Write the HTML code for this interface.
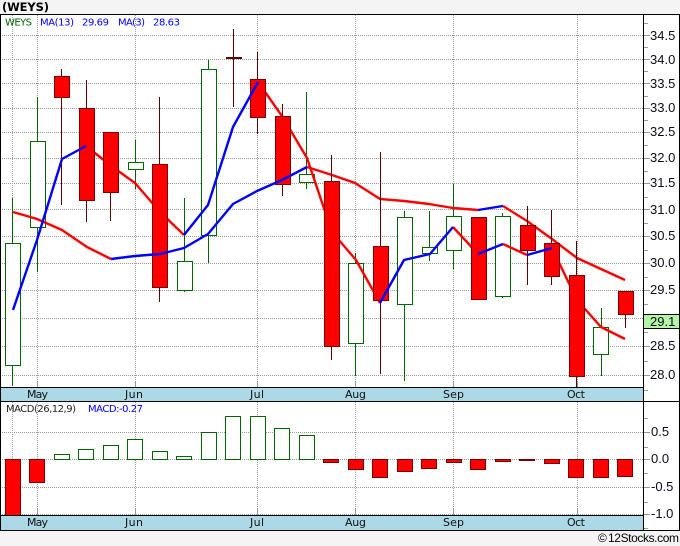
<!DOCTYPE html>
<html><head><meta charset="utf-8"><title>(WEYS)</title>
<style>
html,body{margin:0;padding:0;width:680px;height:546px;background:#f4f4f4;overflow:hidden}
svg{display:block}
text{font-family:"DejaVu Sans","Liberation Sans",sans-serif;font-size:11px;fill:#111}
text.a{font-family:"Liberation Sans",sans-serif;font-size:13px;fill:#0a0a1e}
.g{stroke:#999;stroke-width:1;stroke-dasharray:1 1;fill:none}
.t{stroke:#999;stroke-width:1;fill:none}
.gw{stroke:#006400;stroke-width:1;fill:none}
.rw{stroke:#5a0000;stroke-width:1;fill:none}
.gb{stroke:#006400;stroke-width:1;fill:#fff}
.rb{stroke:#7a0000;stroke-width:1;fill:#f00}
.rl{stroke:#f00;stroke-width:2.4;fill:none;stroke-linejoin:round}
.bl{stroke:#00f;stroke-width:2.4;fill:none;stroke-linejoin:round}
</style></head><body>
<svg width="680" height="546" viewBox="0 0 680 546" xmlns="http://www.w3.org/2000/svg">
<rect width="680" height="546" fill="#f4f4f4"/>
<text x="2" y="11" textLength="47" style="font-weight:bold;font-size:11.5px;fill:#000">(WEYS)</text>
<rect x="0" y="14" width="680" height="517" fill="#fff"/>
<rect x="0" y="388" width="643" height="13" fill="#add8e6"/>
<rect x="0" y="516" width="643" height="14" fill="#add8e6"/>

<path class="g" d="M2 35.5H643M2 59.5H643M2 83.5H643M2 108.5H643M2 132.5H643M2 158.5H643M2 183.5H643M2 209.5H643M2 236.5H643M2 263.5H643M2 290.5H643M2 318.5H643M2 346.5H643M2 375.5H643"/>
<path class="g" d="M12.5 15V387M37.5 15V387M135.5 15V387M257.5 15V387M355.5 15V387M453.5 15V387M577.5 15V387"/>
<path class="g" d="M2 432.5H643M2 459.5H643M2 487.5H643M2 514.5H643"/>
<path class="g" d="M12.5 402V515M37.5 402V515M135.5 402V515M257.5 402V515M355.5 402V515M453.5 402V515M577.5 402V515"/>
<path class="t" d="M37.5 381V387M135.5 381V387M257.5 381V387M355.5 381V387M453.5 381V387M577.5 381V387M37.5 509V515M135.5 509V515M257.5 509V515M355.5 509V515M453.5 509V515M577.5 509V515"/>

<path class="gw" d="M12.5 198V386M37.5 97V272M135.5 140V189M184.5 198V292M208.5 60V263M306.5 92V189M355.5 253V376M404.5 211V381M429.5 211V261M453.5 184V269M502.5 213V298M601.5 308V376"/>
<rect class="gb" x="5.5" y="243.5" width="15" height="122"/>
<rect class="gb" x="30.5" y="141.5" width="15" height="86"/>
<rect class="gb" x="128.5" y="162.5" width="15" height="7"/>
<rect class="gb" x="177.5" y="261.5" width="15" height="29"/>
<rect class="gb" x="201.5" y="69.5" width="15" height="166"/>
<rect class="gb" x="299.5" y="174.5" width="15" height="8"/>
<rect class="gb" x="348.5" y="263.5" width="15" height="80"/>
<rect class="gb" x="397.5" y="217.5" width="15" height="87"/>
<rect class="gb" x="422.5" y="247.5" width="15" height="6"/>
<rect class="gb" x="446.5" y="216.5" width="15" height="34"/>
<rect class="gb" x="495.5" y="216.5" width="15" height="80"/>
<rect class="gb" x="593.5" y="327.5" width="15" height="27"/>

<path class="rl" d="M13 212L37 219L62 230L87 247L111 259"/>
<path class="rl" d="M307 167L332 175L355 183L380 199L404 201L429 204L453 208L478 210"/>
<path class="rl" d="M503 206L527 221L552 239L577 258L601 269L625 280"/>
<path class="rl" d="M86 146L110 165L135 183L160 212L184 235"/>
<path class="rl" d="M258 82L282 116L307 158L332 232L356 260L380 303"/>
<path class="rl" d="M453 227L478 254"/>
<path class="rl" d="M503 244L527 255"/>
<path class="rl" d="M552 248L577 300L601 327L625 339"/>

<path class="rw" d="M61.5 69V205M86.5 80V222M110.5 192V221M159.5 97V302M233.5 29V107M257.5 52V134M282.5 104V196M331.5 155V360M380.5 152V374M527.5 206V285M551.5 210V285M576.5 241V387M625.5 314V328"/>
<rect class="rb" x="54.5" y="76.5" width="15" height="21"/>
<rect class="rb" x="79.5" y="108.5" width="15" height="92"/>
<rect class="rb" x="103.5" y="132.5" width="15" height="60"/>
<rect class="rb" x="152.5" y="164.5" width="15" height="123"/>
<rect x="226" y="57" width="16" height="2" fill="#5a0000"/>
<rect class="rb" x="250.5" y="79.5" width="15" height="38"/>
<rect class="rb" x="275.5" y="116.5" width="15" height="68"/>
<rect class="rb" x="324.5" y="181.5" width="15" height="165"/>
<rect class="rb" x="373.5" y="246.5" width="15" height="54"/>
<rect class="rb" x="471.5" y="217.5" width="15" height="82"/>
<rect class="rb" x="520.5" y="225.5" width="15" height="25"/>
<rect class="rb" x="544.5" y="243.5" width="15" height="33"/>
<rect class="rb" x="569.5" y="275.5" width="15" height="101"/>
<rect class="rb" x="618.5" y="291.5" width="15" height="23"/>

<path class="bl" d="M13 310L37 240L62 159L86 146"/>
<path class="bl" d="M184 235L208 205L233 127L258 82"/>
<path class="bl" d="M111 259L135 256L160 254L184 248L208 234L233 204L257 191L282 180L307 167"/>
<path class="bl" d="M380 303L404 260L430 254L453 227"/>
<path class="bl" d="M478 254L503 244"/>
<path class="bl" d="M478 210L503 206"/>
<path class="bl" d="M527 255L552 248"/>

<rect class="rb" x="5.5" y="459.5" width="15" height="56"/>
<rect class="rb" x="29.5" y="459.5" width="15" height="23"/>
<rect class="gb" x="54.5" y="454.5" width="15" height="5"/>
<rect class="gb" x="78.5" y="449.5" width="15" height="10"/>
<rect class="gb" x="103.5" y="445.5" width="15" height="14"/>
<rect class="gb" x="127.5" y="439.5" width="15" height="20"/>
<rect class="gb" x="152.5" y="451.5" width="15" height="8"/>
<rect class="gb" x="176.5" y="456.5" width="15" height="3"/>
<rect class="gb" x="201.5" y="432.5" width="15" height="27"/>
<rect class="gb" x="225.5" y="416.5" width="15" height="43"/>
<rect class="gb" x="250.5" y="416.5" width="15" height="43"/>
<rect class="gb" x="274.5" y="428.5" width="15" height="31"/>
<rect class="gb" x="299.5" y="435.5" width="15" height="24"/>
<rect class="rb" x="323.5" y="459.5" width="15" height="3"/>
<rect class="rb" x="348.5" y="459.5" width="15" height="10"/>
<rect class="rb" x="372.5" y="459.5" width="15" height="18"/>
<rect class="rb" x="397.5" y="459.5" width="15" height="12"/>
<rect class="rb" x="421.5" y="459.5" width="15" height="9"/>
<rect class="rb" x="446.5" y="459.5" width="15" height="3"/>
<rect class="rb" x="470.5" y="459.5" width="15" height="10"/>
<rect class="rb" x="495.5" y="459.5" width="15" height="2"/>
<rect class="rb" x="519.5" y="459.5" width="15" height="1"/>
<rect class="rb" x="544.5" y="459.5" width="15" height="4"/>
<rect class="rb" x="568.5" y="459.5" width="15" height="18"/>
<rect class="rb" x="593.5" y="459.5" width="15" height="18"/>
<rect class="rb" x="617.5" y="459.5" width="15" height="17"/>

<path class="t" d="M644 23.5H648M644 35.5H650M644 47.5H648M644 59.5H650M644 71.5H648M644 83.5H650M644 96.5H648M644 108.5H650M644 120.5H648M644 132.5H650M644 145.5H648M644 158.5H650M644 171.5H648M644 183.5H650M644 197.5H648M644 209.5H650M644 223.5H648M644 236.5H650M644 250.5H648M644 263.5H650M644 277.5H648M644 290.5H650M644 304.5H648M644 332.5H648M644 346.5H650M644 361.5H648M644 375.5H650M644 390.5H648"/>
<path class="t" d="M644 418.5H648M644 432.5H650M644 447.5H648M644 459.5H650M644 473.5H648M644 487.5H650M644 502.5H648M644 514.5H650M644 528.5H648"/>

<path fill="none" stroke="#000" d="M0 14.5H680M679.5 14V531M643.5 14V531M0.5 14V531M0 387.5H643M0 401.5H680M0 515.5H643M0 530.5H680"/>

<rect x="643.5" y="314.5" width="36" height="14" fill="#b4f5a6" stroke="#000"/>
<text class="a" x="650" y="326">29.1</text>

<text class="a" x="650" y="40">34.5</text>
<text class="a" x="650" y="64">34.0</text>
<text class="a" x="650" y="88">33.5</text>
<text class="a" x="650" y="112">33.0</text>
<text class="a" x="650" y="136">32.5</text>
<text class="a" x="650" y="162">32.0</text>
<text class="a" x="650" y="187">31.5</text>
<text class="a" x="650" y="214">31.0</text>
<text class="a" x="650" y="240">30.5</text>
<text class="a" x="650" y="267">30.0</text>
<text class="a" x="650" y="294">29.5</text>
<text class="a" x="650" y="350">28.5</text>
<text class="a" x="650" y="379">28.0</text>
<text class="a" x="651" y="436">0.5</text>
<text class="a" x="651" y="463">0.0</text>
<text class="a" x="651" y="491">-0.5</text>
<text class="a" x="651" y="518">-1.0</text>

<text x="27" y="398" textLength="21">May</text>
<text x="125" y="398" textLength="18">Jun</text>
<text x="250" y="398" textLength="14">Jul</text>
<text x="345" y="398" textLength="21">Aug</text>
<text x="443" y="398" textLength="21">Sep</text>
<text x="567" y="398" textLength="18">Oct</text>
<text x="27" y="526" textLength="21">May</text>
<text x="125" y="526" textLength="18">Jun</text>
<text x="250" y="526" textLength="14">Jul</text>
<text x="345" y="526" textLength="21">Aug</text>
<text x="443" y="526" textLength="21">Sep</text>
<text x="567" y="526" textLength="18">Oct</text>

<text x="5" y="25.5" textLength="27" style="font-size:10px;fill:#006400">WEYS</text>
<text x="40" y="25.5" textLength="34" style="font-size:10px;fill:#0000ff">MA(13)</text>
<text x="82" y="25.5" textLength="27" style="font-size:10px;fill:#0000ff">29.69</text>
<text x="118" y="25.5" textLength="27" style="font-size:10px;fill:#0000ff">MA(3)</text>
<text x="153" y="25.5" textLength="27" style="font-size:10px;fill:#0000ff">28.63</text>
<text x="6" y="412" textLength="70" style="font-size:10px;fill:#222">MACD(26,12,9)</text>
<text x="88" y="412" textLength="55" style="font-size:10px;fill:#0000ff">MACD:-0.27</text>

<text class="a" x="598" y="542" style="font-size:12px;fill:#000">©</text>
<text class="a" x="608" y="542" textLength="71" style="font-size:12px;fill:#000">12Stocks.com</text>
</svg>
</body></html>
